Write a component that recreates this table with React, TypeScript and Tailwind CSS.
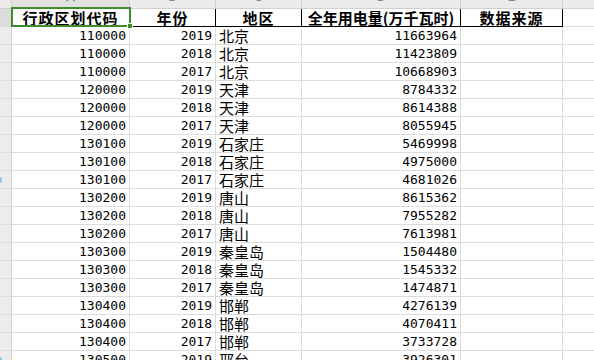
import React from "react";

const rows: [string, string, string, string][] = [
  ["110000", "2019", "北京", "11663964"],
  ["110000", "2018", "北京", "11423809"],
  ["110000", "2017", "北京", "10668903"],
  ["120000", "2019", "天津", "8784332"],
  ["120000", "2018", "天津", "8614388"],
  ["120000", "2017", "天津", "8055945"],
  ["130100", "2019", "石家庄", "5469998"],
  ["130100", "2018", "石家庄", "4975000"],
  ["130100", "2017", "石家庄", "4681026"],
  ["130200", "2019", "唐山", "8615362"],
  ["130200", "2018", "唐山", "7955282"],
  ["130200", "2017", "唐山", "7613981"],
  ["130300", "2019", "秦皇岛", "1504480"],
  ["130300", "2018", "秦皇岛", "1545332"],
  ["130300", "2017", "秦皇岛", "1474871"],
  ["130400", "2019", "邯郸", "4276139"],
  ["130400", "2018", "邯郸", "4070411"],
  ["130400", "2017", "邯郸", "3733728"],
  ["130500", "2019", "邢台", "3926301"],
];

const styles = {
  rowHead: `w-[12px] shrink-0 h-full bg-[#ececec] border-r border-[#d4d4d4]`,
  num: `h-full shrink-0 flex items-end justify-end pr-[3px] pb-[1px] border-r border-[#dcdcdc] text-[13px] leading-[14px] text-black`,
  cjk: `h-full shrink-0 flex items-end pl-[3px] border-r border-[#dcdcdc] text-[15px] leading-[17px] text-black`,
  head: `h-full shrink-0 flex items-end justify-center border-r border-black text-[15px] leading-[17px] font-bold tracking-[1px] text-black`,
};

const mono = { fontFamily: '"DejaVu Sans Mono", monospace' };
const cjk = { fontFamily: '"Noto Sans CJK SC", sans-serif' };

export default function App() {
  return (
    <div className="w-[594px] h-[360px] overflow-hidden bg-white" style={cjk}>
      {/* column letters, mostly scrolled off */}
      <div className="-mt-[13px] h-[22px] flex bg-[#ebebeb] border-b border-[#d0d0d0] text-[12px] leading-none text-[#888]" style={{ fontFamily: '"Liberation Sans", sans-serif' }}>
        <div className="w-[12px] shrink-0 border-r border-[#d4d4d4]" />
        <div className="w-[118px] shrink-0 flex items-end justify-center pb-[5px] bg-[#e1e1e1] text-[#2f6b2f] border-r border-[#d0d0d0]">A</div>
        <div className="w-[86px] shrink-0 flex items-end justify-center pb-[5px] border-r border-[#d0d0d0]">B</div>
        <div className="w-[86px] shrink-0 flex items-end justify-center pb-[5px] border-r border-[#d0d0d0]">C</div>
        <div className="w-[159px] shrink-0 flex items-end justify-center pb-[5px] border-r border-[#d0d0d0]">D</div>
        <div className="w-[102px] shrink-0 flex items-end justify-center pb-[5px] border-r border-[#d0d0d0]">E</div>
        <div className="flex-1" />
      </div>

      {/* header row */}
      <div className="h-[18px] flex border-b border-[#dcdcdc]">
        <div className="w-[12px] shrink-0 h-full bg-[#dcdcdc] border-r border-[#c8c8c8]" />
        <div className="flex border-b border-black -mb-px">
          <div className={`${styles.head} w-[118px] relative`}>
            行政区划代码
            <div className="absolute -left-[1px] -top-[2px] w-[120px] h-[20px] border-2 border-[#3f8a2a]">
              <div className="absolute -right-[4px] -bottom-[4px] w-[6px] h-[6px] bg-[#3f8a2a] border border-white" />
            </div>
          </div>
          <div className={`${styles.head} w-[86px]`}>年份</div>
          <div className={`${styles.head} w-[86px]`}>地区</div>
          <div className={`${styles.head} w-[159px] tracking-normal`}>全年用电量(万千瓦时)</div>
          <div className={`${styles.head} w-[102px]`}>数据来源</div>
        </div>
        <div className="flex-1" />
      </div>

      {rows.map((r, i) => (
        <div key={i} className="h-[18px] flex border-b border-[#dcdcdc]">
          <div className={`${styles.rowHead} flex items-center`}>
            {(i === 8 || i === 18) && <span className="w-[2px] h-[6px] bg-[#8cc6ee] rounded-r" />}
          </div>
          <div className={`${styles.num} w-[118px]`} style={mono}>{r[0]}</div>
          <div className={`${styles.num} w-[86px]`} style={mono}>{r[1]}</div>
          <div className={`${styles.cjk} w-[86px]`}>{r[2]}</div>
          <div className={`${styles.num} w-[159px]`} style={mono}>{r[3]}</div>
          <div className="w-[102px] shrink-0 h-full border-r border-[#dcdcdc]" />
          <div className="flex-1" />
        </div>
      ))}
    </div>
  );
}
